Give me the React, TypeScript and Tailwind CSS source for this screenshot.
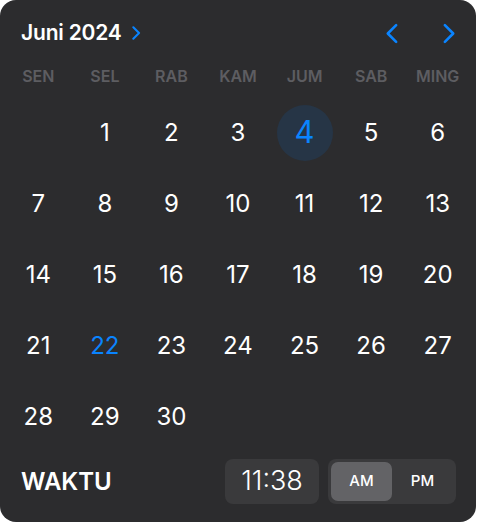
import { useState } from "react";

const DAYS = ["SEN", "SEL", "RAB", "KAM", "JUM", "SAB", "MING"];

function Chevron({ dir, className, w = 2.6 }: { dir: "left" | "right"; className?: string; w?: number }) {
  return (
    <svg viewBox="0 0 14 22" className={className} fill="none">
      <path
        d={dir === "left" ? "M12 2 L3 11 L12 20" : "M2 2 L11 11 L2 20"}
        stroke="#0a84ff"
        strokeWidth={w}
        strokeLinecap="round"
        strokeLinejoin="round"
      />
    </svg>
  );
}

export default function App() {
  const [ampm, setAmpm] = useState<"AM" | "PM">("AM");
  const selected = 4;
  const today = 22;

  const cells: (number | null)[] = [null, ...Array.from({ length: 30 }, (_, i) => i + 1)];

  return (
    <div className="bg-white min-h-screen" style={{ fontFamily: "Inter, 'Noto Sans', sans-serif" }}>
      <div className="w-[476px] h-[522px] rounded-[16px] bg-[#2c2c2e] px-[5px] text-white">
        {/* Header */}
        <div className="h-[66px] flex items-center pl-[16px] pr-[15px]">
          <span className="text-[21px] font-semibold tracking-[-0.2px]">Juni 2024</span>
          <Chevron dir="right" w={3.2} className="w-[9px] h-[14px] ml-[10px]" />
          <div className="ml-auto flex items-center gap-[45px]">
            <Chevron dir="left" w={2.8} className="w-[13px] h-[21px]" />
            <Chevron dir="right" w={2.8} className="w-[13px] h-[21px]" />
          </div>
        </div>

        {/* Weekdays */}
        <div className="grid grid-cols-7 h-[20px] items-center">
          {DAYS.map((d) => (
            <div key={d} className="text-center text-[16px] font-semibold text-[#5d5d61] leading-none">
              {d}
            </div>
          ))}
        </div>

        {/* Days grid */}
        <div className="grid grid-cols-7 mt-[11px]">
          {cells.map((n, i) => (
            <div key={i} className="h-[71px] flex items-center justify-center">
              {n === selected ? (
                <div className="w-[56px] h-[56px] rounded-full bg-[#263546] flex items-center justify-center text-[31px] text-[#0a84ff]">
                  {n}
                </div>
              ) : n !== null ? (
                <span className={`text-[24px] ${n === today ? "text-[#0a84ff]" : "text-white"}`}>{n}</span>
              ) : null}
            </div>
          ))}
        </div>

        {/* Time */}
        <div className="flex items-center mt-[7px] pl-[16px] pr-[15px]">
          <span className="text-[24px] font-semibold">WAKTU</span>
          <div className="ml-auto flex items-center gap-[9px]">
            <div className="w-[94px] h-[45px] rounded-[8px] bg-[#3a3a3c] flex items-center justify-center text-[27px] font-light">
              11:38
            </div>
            <div className="w-[128px] h-[45px] rounded-[8px] bg-[#3a3a3c] p-[3px] flex">
              {(["AM", "PM"] as const).map((v) => (
                <button
                  key={v}
                  onClick={() => setAmpm(v)}
                  className={`w-[64px] h-[39px] rounded-[7px] text-[15px] font-medium ${
                    ampm === v ? "bg-[#636366]" : ""
                  }`}
                >
                  {v}
                </button>
              ))}
            </div>
          </div>
        </div>
      </div>
    </div>
  );
}
